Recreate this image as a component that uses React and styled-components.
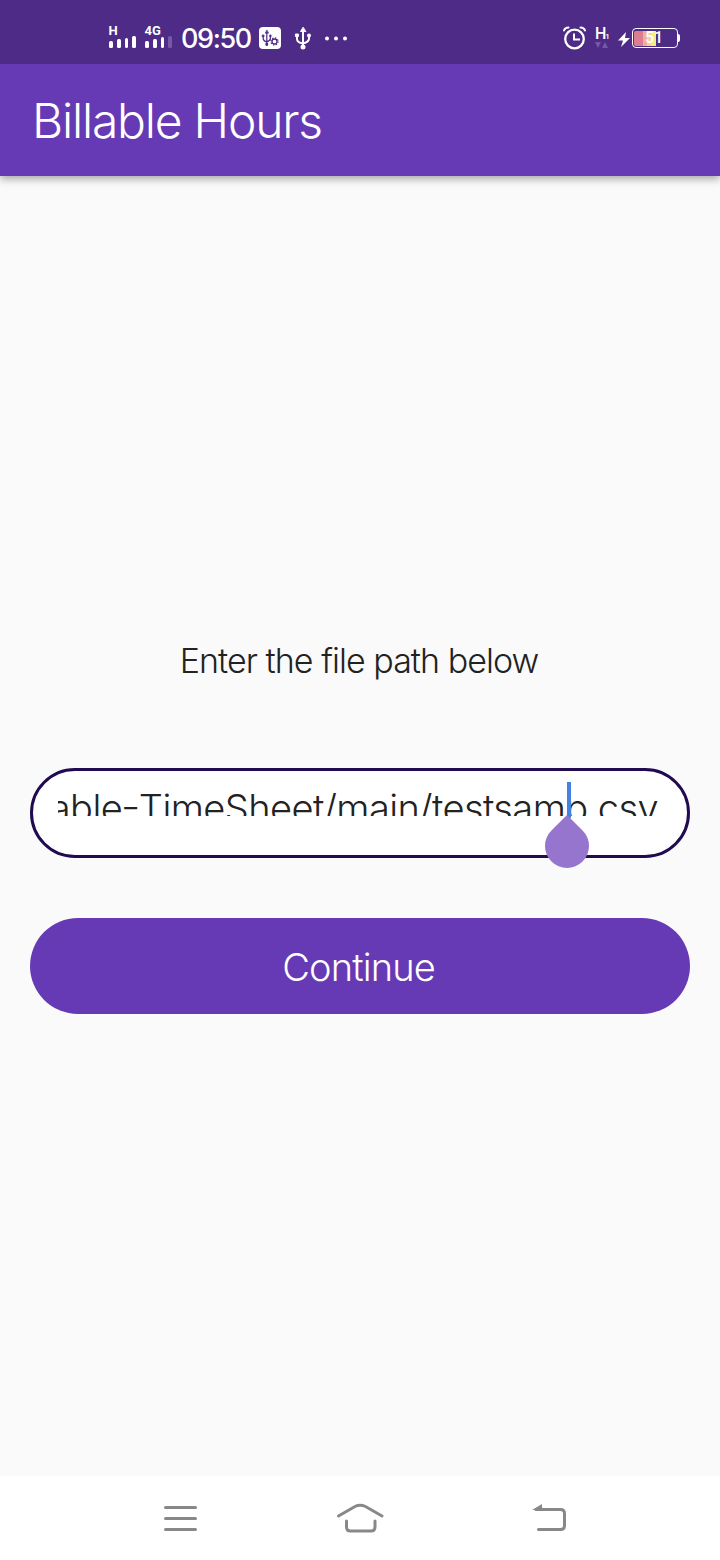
import React from "react";
import styled, { createGlobalStyle } from "styled-components";

const GlobalStyle = createGlobalStyle`
  * { box-sizing: border-box; }
  body {
    margin: 0;
    font-family: Inter, "Liberation Sans", sans-serif;
    background: #fafafa;
  }
`;

const Screen = styled.div`
  display: flex;
  flex-direction: column;
  width: 720px;
  height: 1560px;
  overflow: hidden;
  background: #fafafa;
`;

const StatusBar = styled.header`
  display: flex;
  flex: none;
  justify-content: space-between;
  height: 64px;
  padding: 24px 42px 0 108px;
  background: #4d2b86;
  color: #fff;
`;

const StatusGroup = styled.div`
  display: flex;
  align-items: flex-start;
  height: 28px;
`;

const Signal = styled.div`
  display: flex;
  flex-direction: column;
  width: 28px;
  height: 25px;
  margin-right: ${(p) => p.$gap}px;
`;

const SignalLabel = styled.span`
  height: 12px;
  font-family: Roboto, sans-serif;
  font-size: 13px;
  line-height: 13px;
  font-weight: 700;
  padding-left: 0.5px;
`;

const Bars = styled.span`
  display: flex;
  align-items: flex-end;
  gap: 4px;
  height: 12px;
  padding-left: 1px;
`;

const Bar = styled.i`
  width: 4px;
  height: ${(p) => p.$height}px;
  border-radius: 1.5px;
  background: ${(p) => (p.$dim ? "#7657a8" : "#fff")};
`;

const Clock = styled.time`
  width: 78px;
  font-size: 27px;
  line-height: 29px;
  font-weight: 500;
  letter-spacing: -1.4px;
`;

const Icon = styled.svg`
  display: block;
  flex: none;
  overflow: visible;
  margin-right: ${(p) => p.$gap || 0}px;
`;

const NetworkBadge = styled.div`
  display: flex;
  flex-direction: column;
  width: 14px;
  margin-right: 9px;
  padding-top: 1px;
`;

const NetworkLabel = styled.span`
  height: 17px;
  font-family: Roboto, sans-serif;
  font-size: 16px;
  line-height: 17px;
  font-weight: 500;
  letter-spacing: -1px;
  white-space: nowrap;
  small { font-size: 8px; }
`;

const Battery = styled.div`
  position: relative;
  display: flex;
  align-items: center;
  width: 46px;
  height: 20px;
  margin-top: 4px;
  padding: 1px;
  border: 1.5px solid #fff;
  border-radius: 4px;
  &::after {
    content: "";
    position: absolute;
    right: -3px;
    top: 5px;
    width: 2px;
    height: 8px;
    border-radius: 0 2px 2px 0;
    background: #fff;
  }
`;

const Charge = styled.span`
  width: 22px;
  height: 15px;
  border-radius: 2px 0 0 2px;
  background: linear-gradient(90deg, #dc7d92 0 40%, #f1ae9b 40% 60%, #f8d1a0 60% 78%, #f6ee7c 78%);
`;

const Percent = styled.span`
  position: absolute;
  inset: 0 2px 0 0;
  color: #fff;
  font-family: Roboto, sans-serif;
  font-size: 16px;
  line-height: 18px;
  font-weight: 500;
  text-align: center;
`;

const AppBar = styled.div`
  display: flex;
  flex: none;
  align-items: center;
  height: 112px;
  padding: 2px 32px 0;
  background: #673ab5;
  box-shadow: 0 3px 8px rgba(0, 0, 0, 0.34);
  clip-path: inset(0 0 -16px 0);
`;

const Title = styled.h1`
  margin: 0;
  color: #fff;
  font-size: 48px;
  font-weight: 300;
  line-height: 60px;
  letter-spacing: -1.22px;
`;

const Main = styled.main`
  display: flex;
  flex: 1;
  flex-direction: column;
  padding: 462px 30px 0;
`;

const Prompt = styled.label`
  height: 46px;
  margin-bottom: 84px;
  padding-right: 2px;
  color: #222;
  font-size: 34px;
  font-weight: 300;
  line-height: 46px;
  letter-spacing: -0.95px;
  text-align: center;
`;

const Field = styled.div`
  position: relative;
  height: 90px;
  margin-bottom: 60px;
  padding: 9px 29px 0 25px;
  border: 3px solid #210b50;
  border-radius: 45px;
  background: #fff;
`;

const FieldText = styled.div`
  display: flex;
  justify-content: flex-end;
  height: 36px;
  overflow: hidden;
  color: #222;
  font-size: 38px;
  font-weight: 300;
  line-height: 56px;
  letter-spacing: -0.57px;
  white-space: nowrap;
`;

const RaisedHyphen = styled.span`
  display: inline-block;
  line-height: 1;
  vertical-align: 2px;
  transform: scaleX(1.12);
`;

const Caret = styled.span`
  position: absolute;
  left: 534px;
  top: 11px;
  width: 4px;
  height: 36px;
  background: #4482e2;
`;

const CaretHandle = styled.svg`
  position: absolute;
  left: 512px;
  top: 44px;
`;

const Button = styled.button`
  height: 96px;
  padding: 2px 3px 0 0;
  border: 0;
  border-radius: 48px;
  background: #673ab5;
  color: #fff;
  font-family: inherit;
  font-size: 38px;
  font-weight: 300;
  line-height: 50px;
  letter-spacing: -0.85px;
`;

const NavBar = styled.nav`
  display: flex;
  flex: none;
  align-items: center;
  height: 84px;
  padding-left: 163px;
  background: #fff;
`;

function SignalMeter({ label, gap, heights, dimLast }) {
  return (
    <Signal $gap={gap}>
      <SignalLabel>{label}</SignalLabel>
      <Bars>
        {heights.map((h, i) => (
          <Bar key={i} $height={h} $dim={dimLast && i === heights.length - 1} />
        ))}
      </Bars>
    </Signal>
  );
}

function UsbMark() {
  return (
    <g fill="none" stroke="currentColor" strokeWidth="2" strokeLinecap="round" strokeLinejoin="round">
      <path d="M8 3v16M2 7v3.500q0 3.500 6 4.500M14 7v3q0 3.500-6 5" />
      <path d="M8-1L5.500 3h5zM0.800 5.500h2.600v2.600H.8z" fill="currentColor" strokeWidth="1" />
      <circle cx="8" cy="18.500" r="1.500" fill="currentColor" />
      <circle cx="14" cy="7" r="1" fill="currentColor" />
    </g>
  );
}

export default function App() {
  return (
    <Screen>
      <GlobalStyle />
      <StatusBar>
        <StatusGroup>
          <SignalMeter label="H" gap={8} heights={[7, 9, 10, 12]} />
          <SignalMeter label="4G" gap={9} heights={[7, 9, 11, 12]} dimLast />
          <Clock>09:50</Clock>
          <Icon width="22" height="28" viewBox="0 0 22 28" $gap={14}>
            <rect y="3" width="22" height="22" rx="4" fill="#fff" />
            <g transform="translate(3 7) scale(.6 .72)" color="#4d2b86"><UsbMark /></g>
            <circle cx="15.500" cy="17.500" r="2.500" fill="#fff" stroke="#4d2b86" strokeWidth="1.300" />
            <circle cx="15.500" cy="17.500" r="3.600" fill="none" stroke="#4d2b86" strokeWidth="1.200" strokeDasharray="1.400 1.430" />
          </Icon>
          <Icon width="16" height="28" viewBox="0 -4.500 16 28" $gap={14}><UsbMark /></Icon>
          <Icon width="24" height="28" viewBox="0 0 24 28" fill="#fff">
            <circle cx="2" cy="14.500" r="2" /><circle cx="11" cy="14.500" r="2" /><circle cx="20" cy="14.500" r="2" />
          </Icon>
        </StatusGroup>
        <StatusGroup>
          <Icon width="24" height="28" viewBox="0 0 24 28" fill="none" stroke="#fff" strokeWidth="2.300" $gap={9}>
            <circle cx="12.500" cy="15" r="9.300" />
            <path d="M12 9.500v6h6" strokeWidth="2" />
            <path d="M2 6.500q1-3 4.500-3M23 6.500q-1-3-4.500-3" strokeWidth="2" strokeLinecap="round" />
          </Icon>
          <NetworkBadge>
            <NetworkLabel>H<small>1</small></NetworkLabel>
            <Icon width="13" height="6" viewBox="0 0 13 6" fill="#7657a8"><path d="M0 0h6L3 6zM7 6h6L10 0z" /></Icon>
          </NetworkBadge>
          <Icon width="12" height="28" viewBox="0 0 12 28" fill="#fff" $gap={2}>
            <path d="M8 8L0 16.500h5L3 23l9-9H7z" />
          </Icon>
          <Battery><Charge /><Percent>51</Percent></Battery>
        </StatusGroup>
      </StatusBar>
      <AppBar><Title>Billable Hours</Title></AppBar>
      <Main>
        <Prompt>Enter the file path below</Prompt>
        <Field>
          <FieldText>
            <span>Billable<RaisedHyphen>-</RaisedHyphen>TimeSheet/main/testsamp.csv</span>
          </FieldText>
          <Caret />
          <CaretHandle width="44" height="53" viewBox="0 0 44 53">
            <path d="M22 0L37.560 15.440A22 22 0 1 1 6.440 15.440Z" fill="#9575cd" />
          </CaretHandle>
        </Field>
        <Button>Continue</Button>
      </Main>
      <NavBar>
        <Icon width="35" height="28" viewBox="0 0 35 28" fill="none" stroke="#888" strokeWidth="3" strokeLinecap="round" $gap={138}>
          <path d="M2.500 3.500h30M2.500 14.500h30M2.500 25.500h30" />
        </Icon>
        <Icon width="48" height="30" viewBox="0 1 48 30" fill="none" stroke="#888" strokeWidth="3" strokeLinecap="round" $gap={148}>
          <path d="M2.500 14L19 4.500Q24 2 29.500 4.500L46 14M10.500 19v6q0 4 4 4h20.500q4 0 4-4v-6" />
        </Icon>
        <Icon width="35" height="28" viewBox="0 0 35 28" fill="none" stroke="#888" strokeWidth="3">
          <path d="M4 5.500h24.500q4 0 4 4v12q0 4-4 4H6.500" strokeLinecap="round" />
          <path d="M0 6L10 0v6H0z" fill="#888" stroke="none" />
        </Icon>
      </NavBar>
    </Screen>
  );
}
